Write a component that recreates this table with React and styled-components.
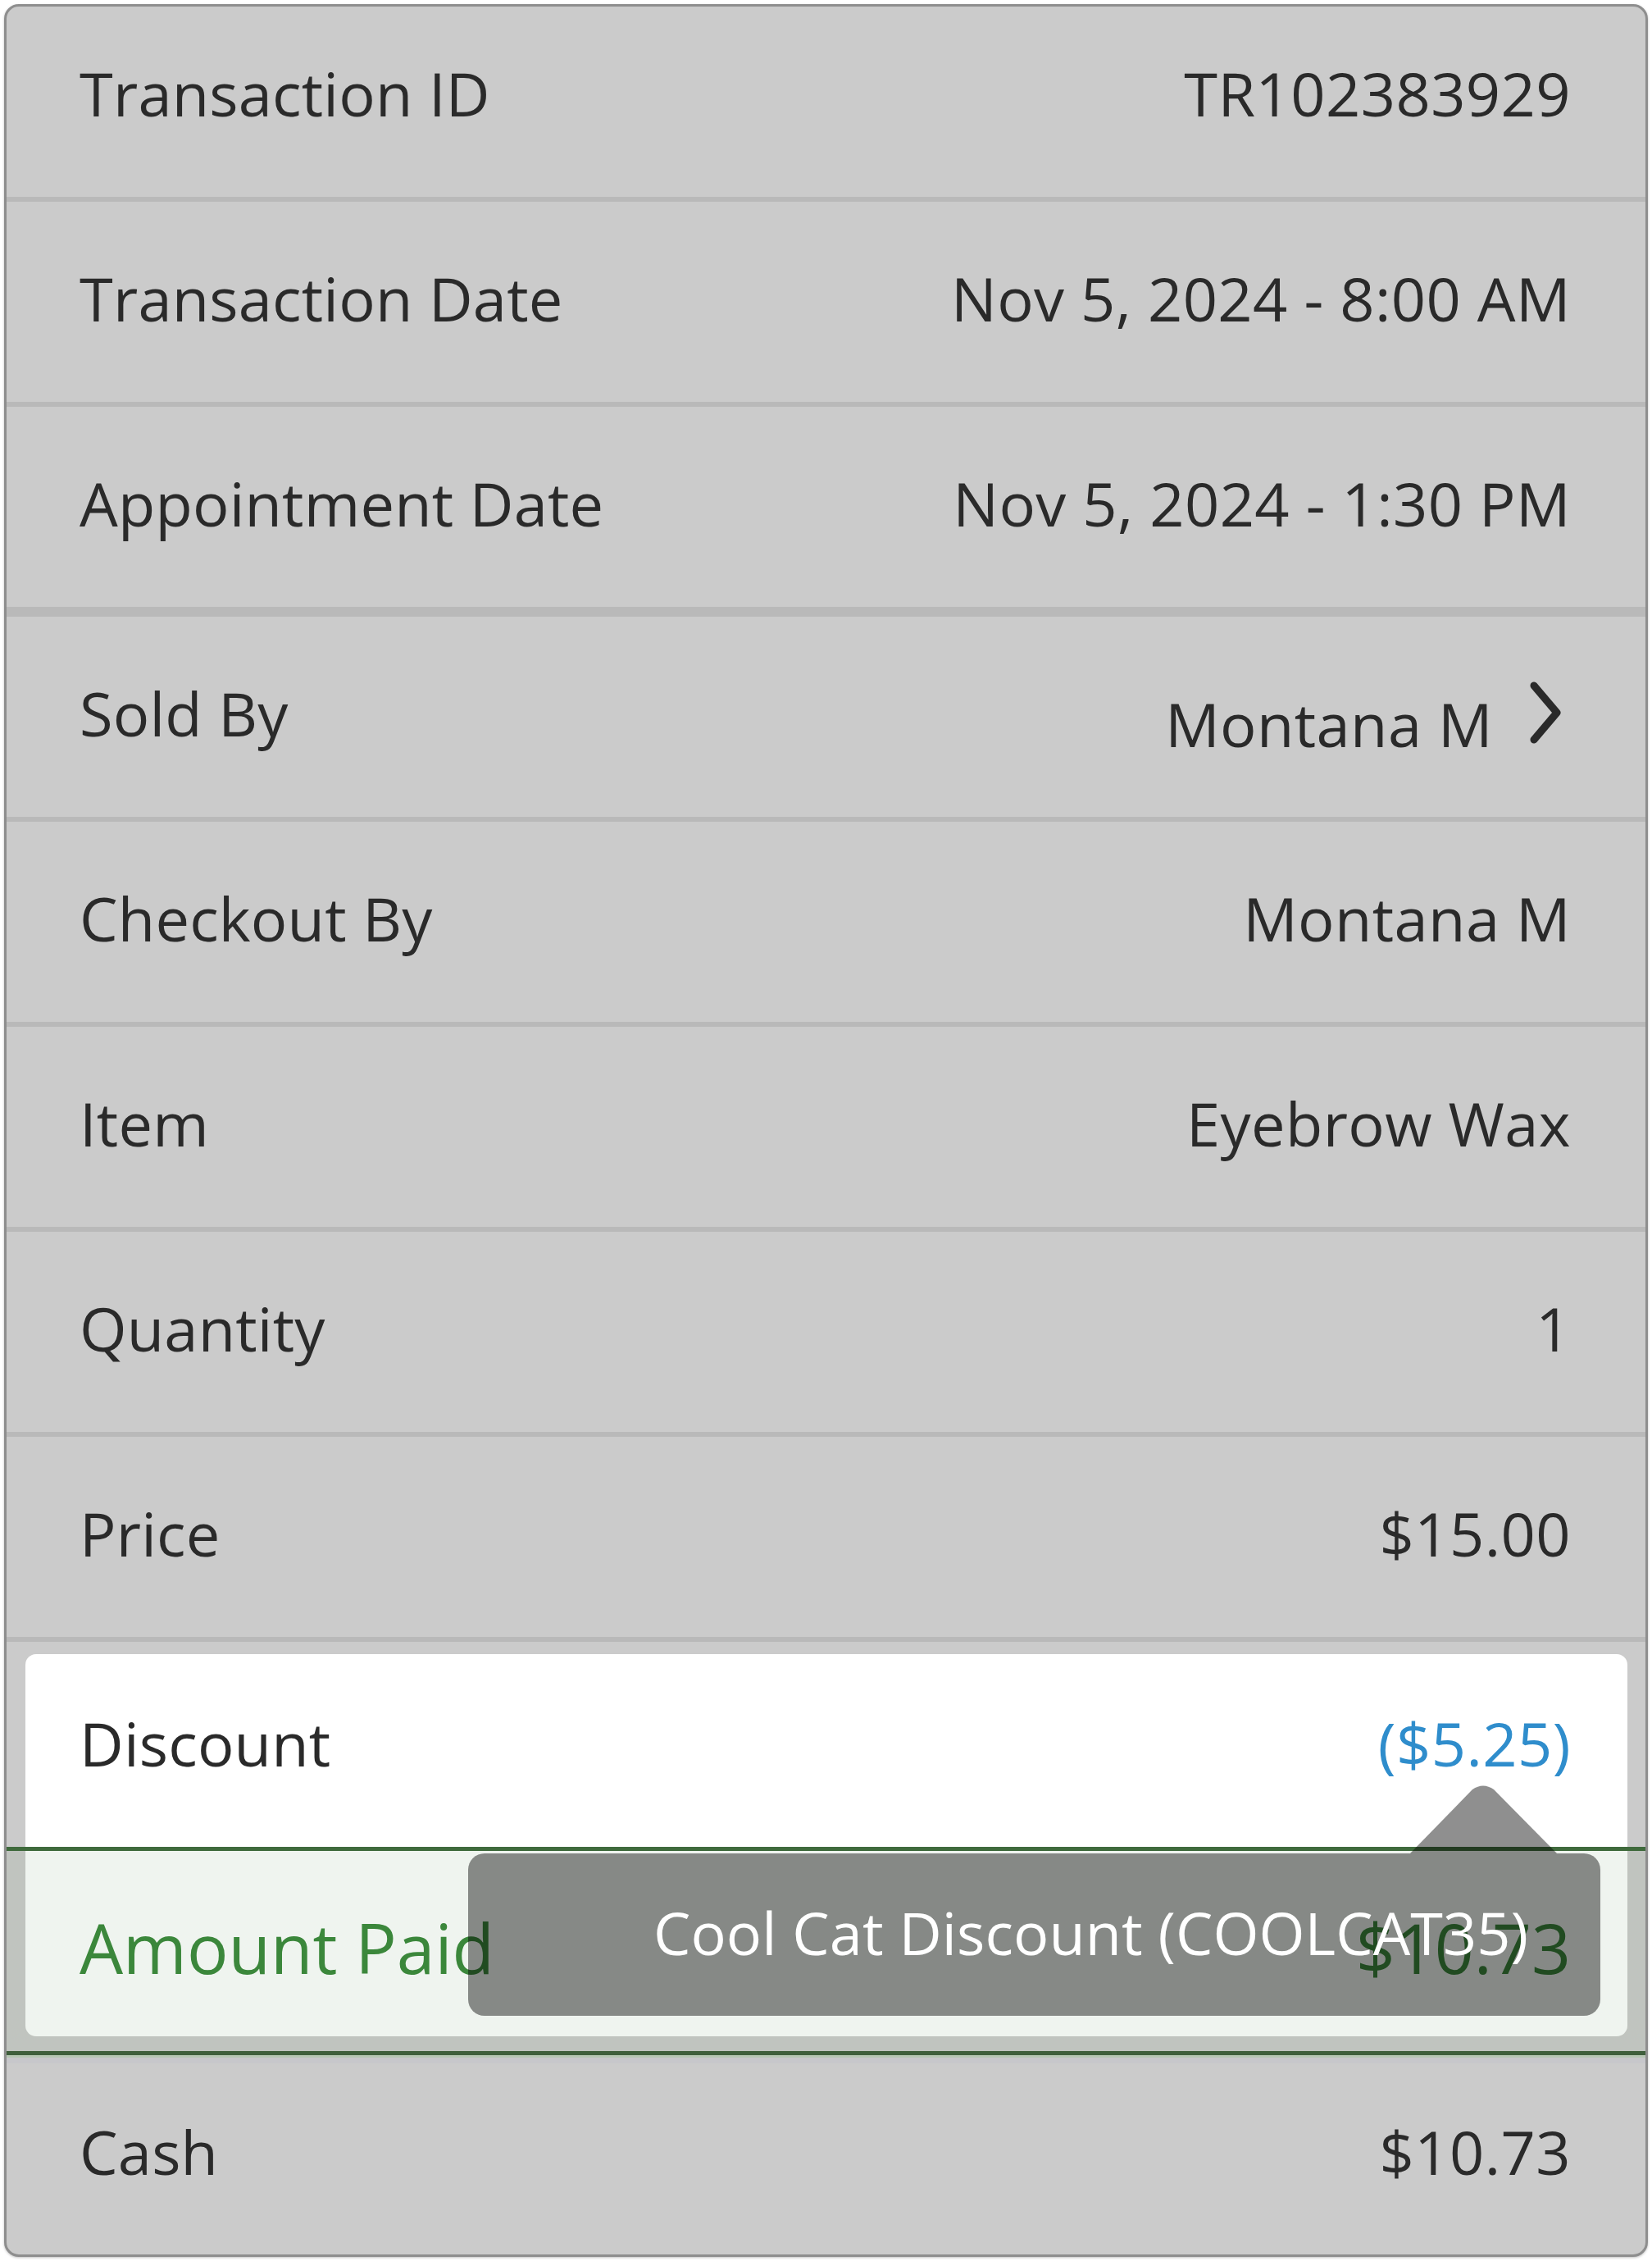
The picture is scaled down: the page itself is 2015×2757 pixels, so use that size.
import React from "react";
import styled, { createGlobalStyle } from "styled-components";

const GlobalStyle = createGlobalStyle`
  body {
    margin: 0;
    background: #ffffff;
    font-family: "Open Sans", "Liberation Sans", sans-serif;
  }
`;

const Page = styled.div`
  padding: 5px;
  width: 2005px;
`;

const Card = styled.div`
  position: relative;
  border: 3px solid #8e8e8e;
  border-radius: 18px;
  overflow: hidden;
  background: #cbcbcb;
  box-shadow: 0 1px 3px rgba(0, 0, 0, 0.25);
`;

// rows: content height + bottom padding (lifts the text a little above center)
const Row = styled.div`
  display: flex;
  align-items: center;
  justify-content: space-between;
  height: ${(p) => p.$height || 234}px;
  padding: 0 91px ${(p) => p.$lift || 10}px 89px;
  border-bottom: ${(p) => (p.$last ? 0 : p.$thick ? 12 : 6)}px solid #b9b9b9;
  box-sizing: content-box;
`;

const Label = styled.span`
  font-size: 74px;
  color: #2a2a2a;
  letter-spacing: 0.2px;
`;

const Value = styled.span`
  font-size: 74px;
  color: ${(p) => p.$color || "#2a2a2a"};
  padding-top: ${(p) => (p.$lower ? 26 : 0)}px;
  letter-spacing: 0.4px;
`;

const ValueGroup = styled.div`
  display: flex;
  align-items: center;
  gap: 44px;
  margin-right: 11px;
`;

const Highlight = styled.div`
  position: relative;
`;

const DiscountWrap = styled.div`
  padding: 15px 22px 0 23px;
`;

const DiscountPanel = styled.div`
  display: flex;
  align-items: center;
  justify-content: space-between;
  height: 217px;
  padding: 0 69px 18px 66px;
  background: #ffffff;
  border-radius: 13px 13px 0 0;
`;

const AmountWrap = styled.div`
  padding: 0 22px 18px 23px;
  background: #c0c4bf;
  border-top: 5px solid #3f6a3c;
  border-bottom: 5px solid #3f5f3c;
  box-shadow: 0 3px 0 #b6c6b3, 0 10px 0 #c7c7cb;
`;

const AmountPanel = styled.div`
  display: flex;
  align-items: center;
  justify-content: space-between;
  height: 226px;
  padding: 0 69px 0 66px;
  background: #eff4ef;
  border-radius: 0 0 13px 13px;
`;

const AmountText = styled.span`
  font-size: 84px;
  color: #3b873b;
  padding-top: 8px;
`;

const Tooltip = styled.div`
  position: absolute;
  top: 258px;
  left: 563px;
  width: 1381px;
  height: 198px;
  box-sizing: border-box;
  padding-left: 226px;
  padding-bottom: 6px;
  display: flex;
  align-items: center;
  border-radius: 20px;
  background: rgba(0, 0, 0, 0.44);
  color: #ffffff;
  font-size: 72px;
  letter-spacing: 0.1px;
`;

const Arrow = styled.svg`
  position: absolute;
  top: -83px;
  left: 1149px;
  display: block;
`;

function Chevron() {
  return (
    <svg width="40" height="78" viewBox="0 0 40 78">
      <polyline
        points="6,6 34,39 6,72"
        fill="none"
        stroke="#2a2a2a"
        strokeWidth="9"
        strokeLinecap="round"
        strokeLinejoin="round"
      />
    </svg>
  );
}

const topRows = [
  { label: "Transaction ID", value: "TR102383929", height: 210, lift: 22 },
  { label: "Transaction Date", value: "Nov 5, 2024 - 8:00 AM" },
  { label: "Appointment Date", value: "Nov 5, 2024 - 1:30 PM", thick: true },
];

const midRows = [
  { label: "Checkout By", value: "Montana M" },
  { label: "Item", value: "Eyebrow Wax" },
  { label: "Quantity", value: "1" },
  { label: "Price", value: "$15.00" },
];

export default function App() {
  return (
    <Page>
      <GlobalStyle />
      <Card>
        {topRows.map((r) => (
          <Row key={r.label} $height={r.height} $lift={r.lift} $thick={r.thick}>
            <Label>{r.label}</Label>
            <Value>{r.value}</Value>
          </Row>
        ))}
        <Row>
          <Label>Sold By</Label>
          <ValueGroup>
            <Value $lower>Montana M</Value>
            <Chevron />
          </ValueGroup>
        </Row>
        {midRows.map((r) => (
          <Row key={r.label}>
            <Label>{r.label}</Label>
            <Value>{r.value}</Value>
          </Row>
        ))}
        <Highlight>
          <DiscountWrap>
            <DiscountPanel>
              <Label>Discount</Label>
              <Value $color="#2f8dcc">($5.25)</Value>
            </DiscountPanel>
          </DiscountWrap>
          <AmountWrap>
            <AmountPanel>
              <AmountText>Amount Paid</AmountText>
              <AmountText>$10.73</AmountText>
            </AmountPanel>
          </AmountWrap>
          <Tooltip>
            <Arrow width="179" height="83" viewBox="0 0 179 83">
              <path
                d="M0 83 L76 5 Q89 -4 102 5 L179 83 Z"
                fill="rgba(0,0,0,0.44)"
              />
            </Arrow>
            Cool Cat Discount (COOLCAT35)
          </Tooltip>
        </Highlight>
        <Row $height={235} $lift={8} $last>
          <Label>Cash</Label>
          <Value>$10.73</Value>
        </Row>
      </Card>
    </Page>
  );
}
